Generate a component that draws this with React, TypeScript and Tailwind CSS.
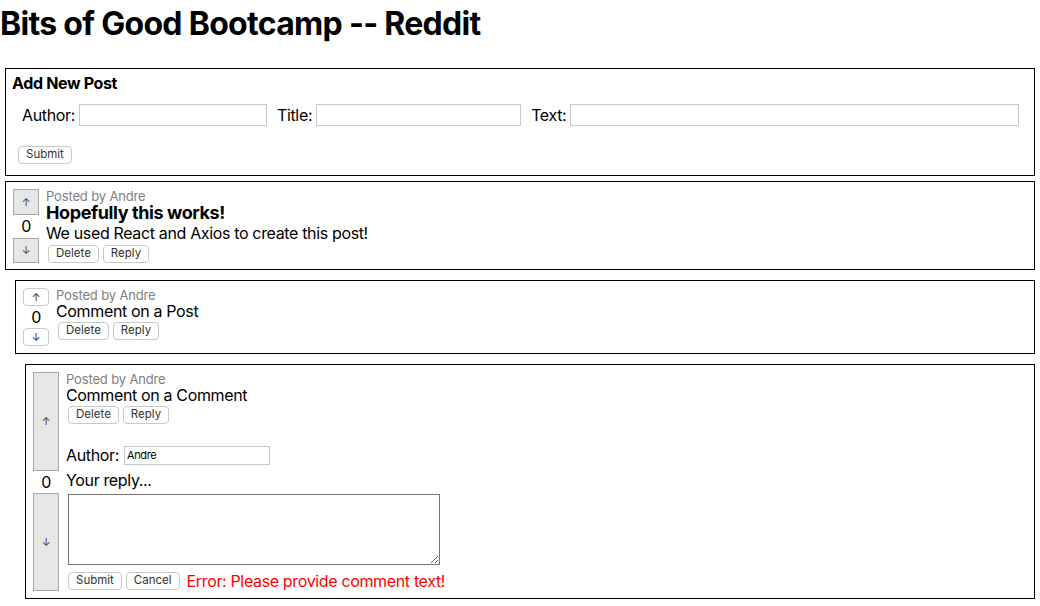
const font = { fontFamily: "Inter, 'Liberation Sans', sans-serif" };

function SmallButton({ children, className = "" }: { children: React.ReactNode; className?: string }) {
  return (
    <button
      className={`h-[18px] rounded-[4px] border border-[#c8c8c8] bg-white px-[7px] text-[11.5px] leading-none tracking-[0px] text-[#333] ${className}`}
    >
      {children}
    </button>
  );
}

function GrayVote({ arrow }: { arrow: string }) {
  return (
    <button className="flex flex-1 items-center justify-center border border-[#a8a8a8] bg-[#e6e6e6] text-[11px] text-[#444]">
      {arrow}
    </button>
  );
}

function Posted() {
  return <div className="h-[14px] text-[13px] leading-[14px] tracking-[-0.15px] text-[#808080]">Posted by Andre</div>;
}

export default function App() {
  return (
    <div className="min-h-[606px] w-[1040px] bg-white text-black tracking-[-0.35px]" style={font}>
      <h1 className="pt-[5px] text-[32px] font-bold leading-[38px] tracking-[-0.7px]">Bits of Good Bootcamp -- Reddit</h1>

      {/* new post form */}
      <div className="mx-[5px] mt-[25px] h-[108px] border border-black px-[6px] pt-[5px]">
        <div className="text-[16px] font-bold leading-[19px]">Add New Post</div>
        <div className="mt-[10px] flex items-center pl-[10px] pr-[9px] text-[16px]">
          <span className="mr-[4px]">Author:</span>
          <input className="h-[22px] w-[188px] border border-[#c8c8c8]" />
          <span className="ml-[10px] mr-[4px]">Title:</span>
          <input className="h-[22px] w-[205px] border border-[#c8c8c8]" />
          <span className="ml-[10px] mr-[4px]">Text:</span>
          <input className="h-[22px] flex-1 border border-[#c8c8c8]" />
        </div>
        <SmallButton className="ml-[6px] mt-[19px]">Submit</SmallButton>
      </div>

      {/* post */}
      <div className="mx-[5px] mt-[5px] flex h-[89px] gap-[7px] border border-black p-[7px] pb-[6px]">
        <div className="flex w-[26px] flex-col">
          <GrayVote arrow="↑" />
          <div className="h-[23px] text-center text-[16px] leading-[23px]">0</div>
          <GrayVote arrow="↓" />
        </div>
        <div className="flex flex-col">
          <Posted />
          <div className="text-[18px] font-bold leading-[20px] tracking-[-0.4px]">Hopefully this works!</div>
          <div className="text-[16px] leading-[20px]">We used React and Axios to create this post!</div>
          <div className="ml-[2px] mt-[2px] flex gap-[4px]">
            <SmallButton>Delete</SmallButton>
            <SmallButton>Reply</SmallButton>
          </div>
        </div>
      </div>

      {/* comment */}
      <div className="ml-[15px] mr-[5px] mt-[10px] flex h-[74px] gap-[7px] border border-black p-[7px]">
        <div className="flex w-[26px] flex-col">
          <SmallButton className="w-[26px] px-0 text-[11px]">↑</SmallButton>
          <div className="h-[22px] text-center text-[16px] leading-[23px]">0</div>
          <SmallButton className="w-[26px] px-0 text-[11px]">↓</SmallButton>
        </div>
        <div className="flex flex-col">
          <Posted />
          <div className="text-[16px] leading-[19px]">Comment on a Post</div>
          <div className="ml-[2px] mt-[1px] flex gap-[4px]">
            <SmallButton>Delete</SmallButton>
            <SmallButton>Reply</SmallButton>
          </div>
        </div>
      </div>

      {/* nested comment with reply form */}
      <div className="ml-[25px] mr-[5px] mt-[10px] flex h-[235px] gap-[7px] border border-black p-[7px]">
        <div className="flex w-[26px] flex-col">
          <GrayVote arrow="↑" />
          <div className="h-[22px] text-center text-[16px] leading-[23px]">0</div>
          <GrayVote arrow="↓" />
        </div>
        <div className="flex flex-col">
          <Posted />
          <div className="text-[16px] leading-[19px]">Comment on a Comment</div>
          <div className="ml-[2px] mt-[1px] flex gap-[4px]">
            <SmallButton>Delete</SmallButton>
            <SmallButton>Reply</SmallButton>
          </div>
          <div className="mt-[21px] flex items-center text-[16px] leading-[20px]">
            <span className="mr-[5px]">Author:</span>
            <input
              defaultValue="Andre"
              className="h-[19px] w-[146px] border border-[#c8c8c8] px-[2px] text-[11px]"
            />
          </div>
          <div className="mt-[5px] text-[16px] leading-[20px]">Your reply...</div>
          <textarea className="ml-[2px] mt-[4px] h-[71px] w-[372px] border border-[#767676]" />
          <div className="ml-[2px] mt-[7px] flex items-center gap-[4px]">
            <SmallButton>Submit</SmallButton>
            <SmallButton>Cancel</SmallButton>
            <span className="ml-[3px] text-[16px] leading-[18px] text-[#ff0000]">Error: Please provide comment text!</span>
          </div>
        </div>
      </div>
    </div>
  );
}
